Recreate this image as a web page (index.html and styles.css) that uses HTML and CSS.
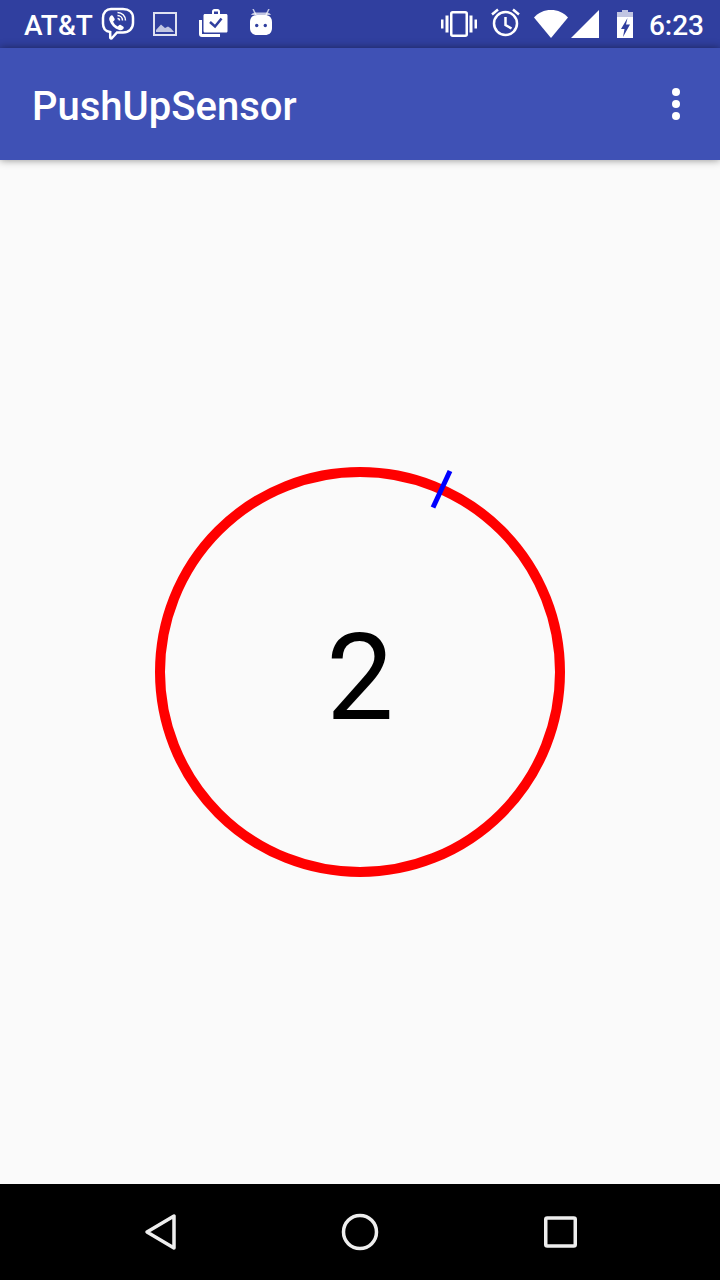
FILE: index.html
```html
<!DOCTYPE html>
<html>
  <head>
    <title>PushUpSensor</title>
    <link rel="stylesheet" href="styles.css">
  </head>
  <body>
    <div id="container">
      <!-- Status bar -->
      <div class="status-bar">
        <span class="carrier">AT&amp;T</span>
        <svg class="icon viber" width="36" height="36" viewBox="0 0 36 36">
          <path class="line" d="M11 3h12c6 0 10 3.500 10 9v5c0 5.500-4 9.500-10 9.500h-6l-5 5.500c-.8.800-1.800.300-1.800-.800v-5.200C5.500 25.500 3 22 3 17.500V12c0-5.500 3.500-9 8-9z"/>
          <path class="solid" d="M10.500 10c.9-.9 2-.9 2.600.2l1.400 2.400c.4.900.2 1.600-.5 2.200l-.9.700c.8 2.300 2.500 4 4.700 4.900l.9-1c.6-.6 1.400-.7 2.100-.3l2.300 1.500c.9.600.9 1.700.1 2.500-1.100 1.100-2.600 1.500-4.100 1-4.900-1.700-8.200-5-9.700-9.800-.5-1.600 0-3.200 1.100-4.300z"/>
          <path class="thin" d="M17.500 6.500c4.500 0 8 3.500 8 8M17.500 9.500c2.800 0 5 2.200 5 5M17.500 12.500c1.100 0 2 .900 2 2"/>
        </svg>
        <svg class="icon image" width="24" height="24" viewBox="0 0 24 24">
          <rect class="dim-line" x="1" y="1" width="22" height="22"/>
          <path class="dim-solid" d="M3 20v-2l5-5.500 4 3.500 3-1.500 3 2 3 3.500z"/>
        </svg>
        <svg class="icon work" width="30" height="30" viewBox="0 0 30 30">
          <path class="solid" d="M6 5h7V2.500C13 1 14 0 15.500 0h3C20 0 21 1 21 2.500V5h6c1 0 1.500.6 1.500 1.500V22c0 1-.6 1.500-1.500 1.500H6c-1 0-1.500-.6-1.500-1.500V6.500C4.500 5.600 5 5 6 5zm9-2.500V5h4V2.500z"/>
          <path class="check" d="M11 13l5 4.500 6.500-8"/>
          <path class="stack" d="M1.500 11v14c0 1 .6 1.500 1.500 1.500h18"/>
        </svg>
        <svg class="icon android" width="24" height="28" viewBox="0 0 24 28">
          <path class="thin dim" d="M4 0l3 6M20 0l-3 6"/>
          <path class="dim-solid" d="M6 3.500h12c2 0 3 1 4 2.500H2c1-1.500 2-2.500 4-2.500z"/>
          <path class="solid" d="M8 6h8c4 0 7 2.500 7 7v6c0 4.500-3 7-7 7H8c-4 0-7-2.500-7-7v-6c0-4.500 3-7 7-7z"/>
          <circle class="eye" cx="7.700" cy="16.500" r="1.700"/>
          <circle class="eye" cx="16.300" cy="16.500" r="1.700"/>
        </svg>

        <div class="status-right">
          <svg class="icon vibrate" width="36" height="28" viewBox="0 0 36 28">
            <rect class="line-thick" x="10.250" y="2.250" width="15.500" height="23.500" rx="1.500"/>
            <path class="bars" d="M1 9.500v9M6 5.500v17M30 5.500v17M35 9.500v9"/>
          </svg>
          <svg class="icon alarm" width="30" height="30" viewBox="0 0 30 30">
            <circle class="line-thick" cx="14.500" cy="15.500" r="11.500"/>
            <path class="line-thick" d="M14.500 9v8l6 3.500M1 6.500L7 1.500M28 6.500L22 1.500"/>
          </svg>
          <svg class="icon wifi" width="36" height="30" viewBox="0 0 36 30">
            <path class="solid" d="M1 8.500C5.500 3.500 11 1 18 1s12.500 2.500 17 7.500L18 29z"/>
          </svg>
          <svg class="icon signal" width="30" height="28" viewBox="0 0 30 28">
            <path class="solid" d="M1 28L29 0v28z"/>
          </svg>
          <svg class="icon battery" width="16" height="30" viewBox="0 0 16 30">
            <path class="dim-solid" d="M5 1h6v2h5v6H0V3h5z"/>
            <path class="solid" d="M0 8h16v21H0z"/>
            <path class="bolt" d="M10.500 9L4 20h3.500L6 28l7-12.500H9z"/>
          </svg>
          <span class="clock">6:23</span>
        </div>
      </div>

      <!-- App bar -->
      <div class="app-bar">
        <span class="app-title">PushUpSensor</span>
        <svg class="menu" width="8" height="32" viewBox="0 0 8 32">
          <circle cx="4" cy="4" r="4"/>
          <circle cx="4" cy="16" r="4"/>
          <circle cx="4" cy="28" r="4"/>
        </svg>
      </div>

      <!-- Counter -->
      <div class="content">
        <svg class="counter" width="420" height="420" viewBox="0 0 420 420">
          <circle class="ring" cx="210" cy="210" r="200"/>
          <line class="tick" x1="283" y1="45.500" x2="300" y2="9"/>
          <text class="count" x="210" y="257">2</text>
        </svg>
      </div>

      <!-- Navigation bar -->
      <div class="nav-bar">
        <svg class="nav-icon" width="40" height="40" viewBox="0 0 40 40">
          <path d="M34 4v32L7 20z"/>
        </svg>
        <svg class="nav-icon" width="40" height="40" viewBox="0 0 40 40">
          <circle cx="20" cy="20" r="16.500"/>
        </svg>
        <svg class="nav-icon" width="40" height="40" viewBox="0 0 40 40">
          <rect x="5.750" y="6" width="29.500" height="28" rx="1.500"/>
        </svg>
      </div>
    </div>
  </body>
</html>
```

FILE: styles.css
```css
html {
  width: 100%;
  height: 100%;
  margin: 0;
  padding: 0;
}
body {
  font-family: Roboto, sans-serif;
  margin: 0;
  padding: 0;
  width: 100%;
  height: 100%;
  background-color: #fafafa;
}

#container {
  display: flex;
  flex-direction: column;
  height: 100%;
}

.status-bar {
  display: flex;
  align-items: center;
  flex: 0 0 48px;
  padding: 0 16px 0 24px;
  box-sizing: border-box;
  background-color: #303f9f;
  color: #fff;
}

.carrier,
.clock {
  font-size: 28px;
  font-weight: 500;
  padding-top: 2px;
}

.carrier {
  width: 76px;
}

.status-right {
  display: flex;
  align-items: center;
  margin-left: auto;
}

.icon {
  display: block;
  flex: none;
}

.viber {
  margin-right: 17px;
}
.image {
  margin-right: 22px;
}
.work {
  margin-right: 20px;
}
.android {
  margin-top: -3px;
}
.vibrate {
  margin-right: 14px;
}
.alarm {
  margin-right: 12px;
  margin-top: -3px;
}
.wifi {
  margin-top: -1px;
}
.signal {
  margin-left: 1px;
  margin-right: 17px;
}
.battery {
  margin-right: 16px;
  margin-top: -1px;
}

.solid {
  fill: #fff;
}
.line,
.line-thick,
.thin,
.bars,
.stack {
  fill: none;
  stroke: #fff;
}
.line {
  stroke-width: 2.5px;
}
.line-thick {
  stroke-width: 2.5px;
}
.thin {
  stroke-width: 1.5px;
}
.thin.dim {
  stroke: rgba(255, 255, 255, 0.7);
}
.bars,
.stack {
  stroke-width: 3px;
}
.dim-line {
  fill: none;
  stroke: rgba(255, 255, 255, 0.85);
  stroke-width: 2px;
}
.dim-solid {
  fill: rgba(255, 255, 255, 0.7);
}
.check {
  fill: none;
  stroke: #303f9f;
  stroke-width: 2.5px;
}
.eye,
.bolt {
  fill: #303f9f;
}

.app-bar {
  position: relative;
  display: flex;
  align-items: center;
  justify-content: space-between;
  flex: 0 0 112px;
  padding: 0 40px 0 32px;
  box-sizing: border-box;
  background-color: #3f51b5;
  box-shadow: 0 0 8px rgba(0, 0, 0, 0.45);
  color: #fff;
}

.app-title {
  font-size: 40px;
  font-weight: 500;
  padding-top: 4px;
}

.menu {
  display: block;
  fill: #fff;
}

.content {
  display: flex;
  flex: 1;
  align-items: center;
  justify-content: center;
}

.ring {
  fill: none;
  stroke: #f00;
  stroke-width: 10px;
}

.tick {
  stroke: #00f;
  stroke-width: 5px;
}

.count {
  font-size: 120px;
  text-anchor: middle;
  fill: #000;
}

.nav-bar {
  display: flex;
  align-items: center;
  justify-content: center;
  gap: 160px;
  flex: 0 0 96px;
  background-color: #000;
}

.nav-icon {
  display: block;
  fill: none;
  stroke: #eee;
  stroke-width: 3.5px;
  stroke-linejoin: round;
}
```
